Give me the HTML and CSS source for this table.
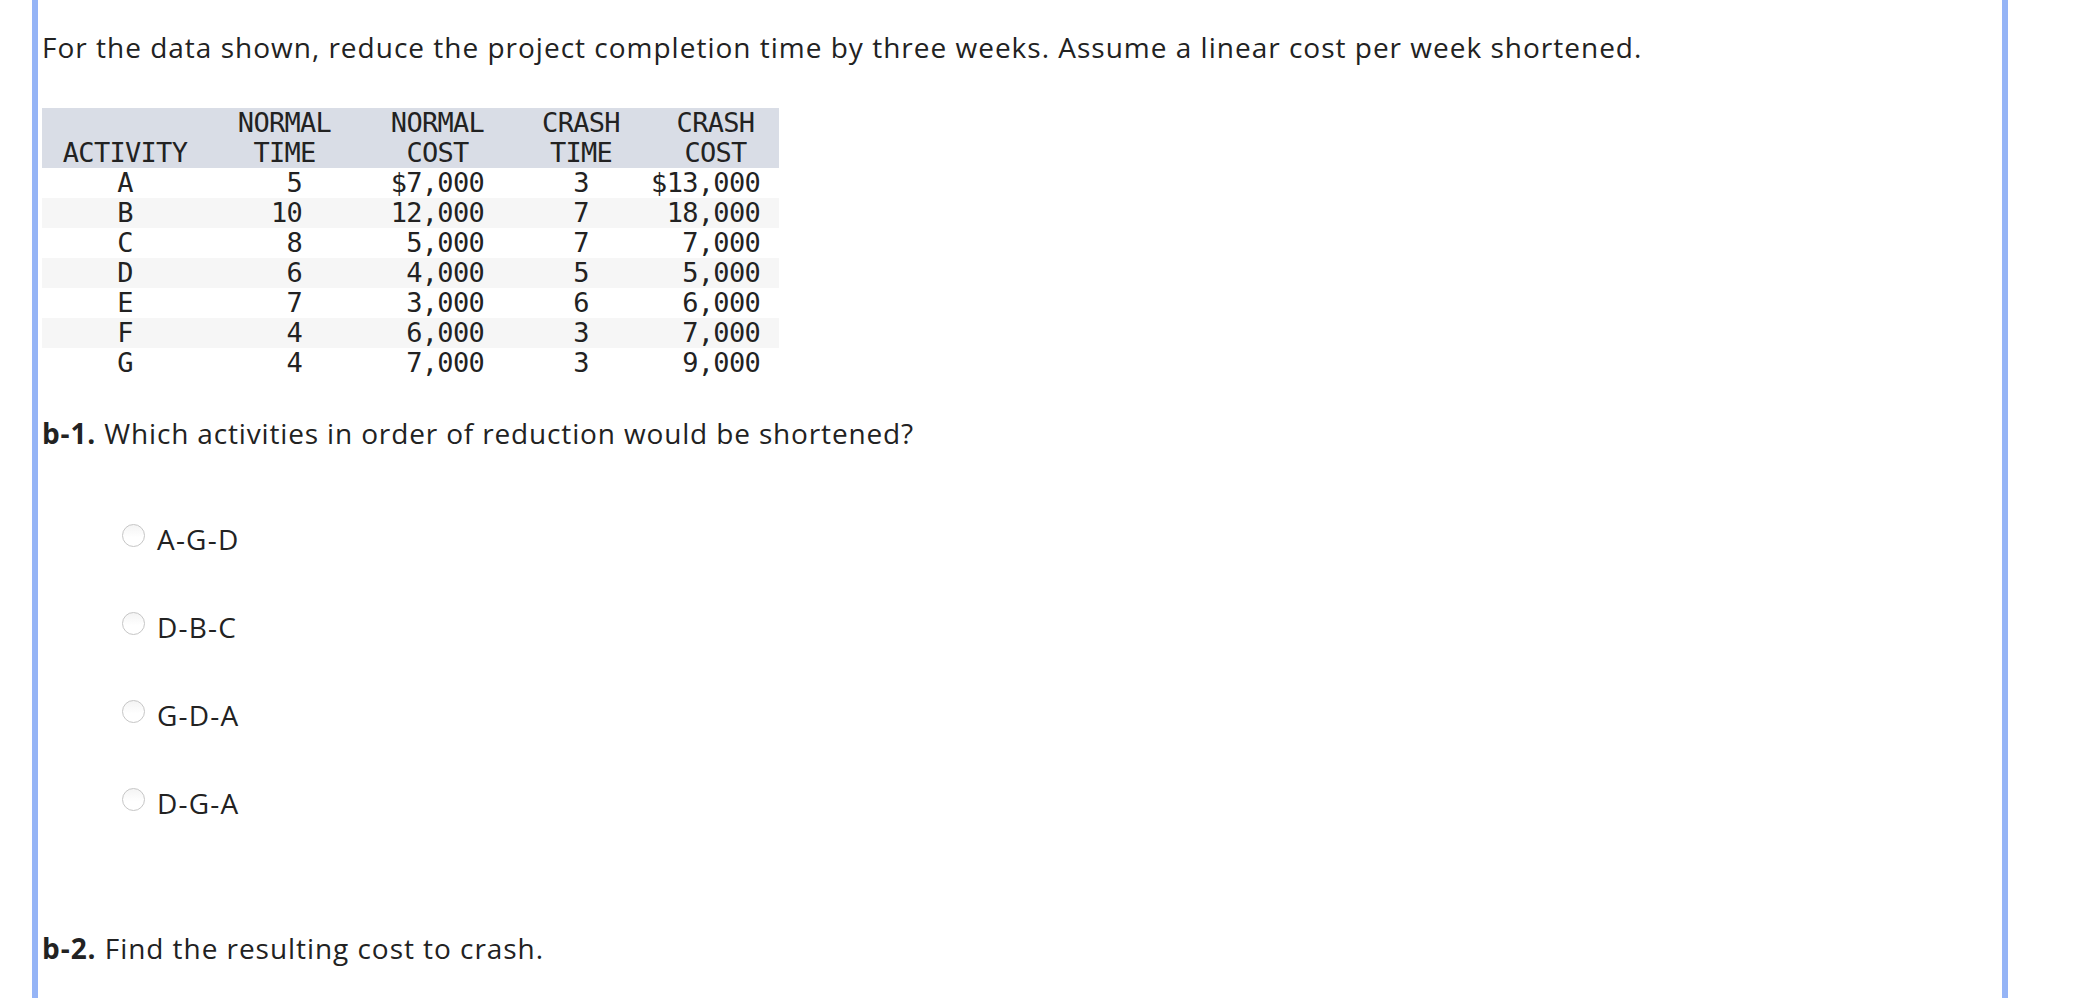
FILE: index.html
```html
<!DOCTYPE html>
<html lang="en">
<head>
<meta charset="utf-8">
<title>Project crashing question</title>
<link rel="stylesheet" href="styles.css">
</head>
<body>
<div class="frame">
  <p class="prompt">For the data shown, reduce the project completion time by three weeks. Assume a linear cost per week shortened.</p>

  <table class="data">
    <colgroup>
      <col class="w1"><col class="w2"><col class="w3"><col class="w4"><col class="w5">
    </colgroup>
    <thead>
      <tr>
        <th class="c1"><br>ACTIVITY</th>
        <th class="c2">NORMAL<br>TIME</th>
        <th class="c3">NORMAL<br>COST</th>
        <th class="c4">CRASH<br>TIME</th>
        <th class="c5">CRASH<br>COST</th>
      </tr>
    </thead>
    <tbody>
      <tr><td class="c1">A</td><td class="c2">5</td><td class="c3">$7,000</td><td class="c4">3</td><td class="c5">$13,000</td></tr>
      <tr><td class="c1">B</td><td class="c2">10</td><td class="c3">12,000</td><td class="c4">7</td><td class="c5">18,000</td></tr>
      <tr><td class="c1">C</td><td class="c2">8</td><td class="c3">5,000</td><td class="c4">7</td><td class="c5">7,000</td></tr>
      <tr><td class="c1">D</td><td class="c2">6</td><td class="c3">4,000</td><td class="c4">5</td><td class="c5">5,000</td></tr>
      <tr><td class="c1">E</td><td class="c2">7</td><td class="c3">3,000</td><td class="c4">6</td><td class="c5">6,000</td></tr>
      <tr><td class="c1">F</td><td class="c2">4</td><td class="c3">6,000</td><td class="c4">3</td><td class="c5">7,000</td></tr>
      <tr><td class="c1">G</td><td class="c2">4</td><td class="c3">7,000</td><td class="c4">3</td><td class="c5">9,000</td></tr>
    </tbody>
  </table>

  <p class="question"><b>b-1.</b> Which activities in order of reduction would be shortened?</p>

  <div class="options">
    <label class="option"><span class="radio"></span><span class="opt-text">A-G-D</span></label>
    <label class="option"><span class="radio"></span><span class="opt-text">D-B-C</span></label>
    <label class="option"><span class="radio"></span><span class="opt-text">G-D-A</span></label>
    <label class="option"><span class="radio"></span><span class="opt-text">D-G-A</span></label>
  </div>

  <p class="question q2"><b>b-2.</b> Find the resulting cost to crash.</p>
</div>
</body>
</html>
```

FILE: styles.css
```css
html, body {
  margin: 0;
  padding: 0;
  background: #ffffff;
}

body {
  font-family: "Open Sans", Lato, sans-serif;
  color: #222222;
}

.frame {
  box-sizing: border-box;
  margin-left: 32px;
  width: 1976px;
  height: 998px;
  border-left: 6px solid #95b4f6;
  border-right: 6px solid #95b4f6;
  padding: 27px 0 0 4px;
}

.prompt {
  margin: 0;
  font-size: 28px;
  line-height: 40px;
  letter-spacing: 1px;
}

.data {
  margin-top: 41px;
  border-collapse: collapse;
  table-layout: fixed;
  width: 737px;
  font-family: "DejaVu Sans Mono", monospace;
  font-size: 27px;
  letter-spacing: -0.7px;
  line-height: 30px;
  color: #222222;
}

.w1 { width: 166px; }
.w2 { width: 153px; }
.w3 { width: 153px; }
.w4 { width: 126px; }
.w5 { width: 139px; }

.data th,
.data td {
  padding: 0;
  white-space: nowrap;
  font-weight: normal;
  vertical-align: bottom;
}

.data thead tr {
  background: #d9dde6;
}

.data tbody tr:nth-child(even) {
  background: #f6f6f6;
}

.data th { text-align: center; }

.data td.c1 { text-align: center; }
.data td.c2 { text-align: right; padding-right: 59px; }
.data td.c3 { text-align: right; padding-right: 30px; }
.data .c4 { text-align: center; padding-left: 8px; }
.data th.c5 { padding-left: 20px; padding-right: 8px; }
.data td.c5 { text-align: right; padding-right: 19px; }

.question {
  margin: 35px 0 0;
  font-size: 28px;
  line-height: 40px;
  letter-spacing: 0.85px;
}

.question b {
  font-weight: 700;
}

.options {
  display: flex;
  flex-direction: column;
  gap: 48px;
  margin-top: 66px;
  padding-left: 80px;
}

.option {
  display: flex;
  align-items: center;
  height: 40px;
  font-size: 28px;
  line-height: 40px;
  letter-spacing: 1.2px;
}

.radio {
  box-sizing: border-box;
  width: 23px;
  height: 23px;
  border-radius: 50%;
  border: 1px solid #c6c6c6;
  background: linear-gradient(#f4f4f4, #ffffff 60%);
  margin-right: 12px;
  margin-top: -7px;
  flex: none;
}

.q2 {
  margin-top: 105px;
  letter-spacing: 0.95px;
}
```
